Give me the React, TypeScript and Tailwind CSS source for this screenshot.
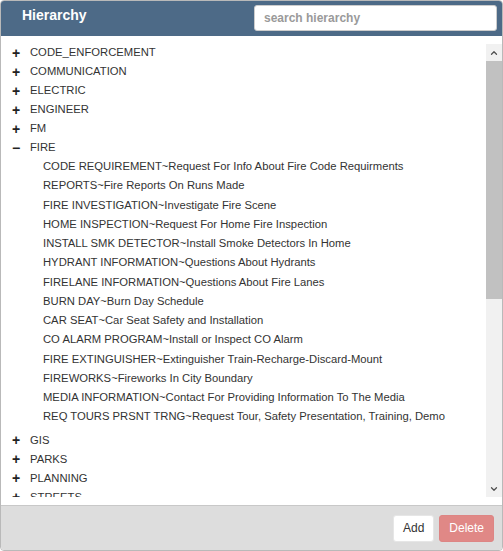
import { ChevronDown, ChevronUp } from 'lucide-react'

const topBefore = ['CODE_ENFORCEMENT', 'COMMUNICATION', 'ELECTRIC', 'ENGINEER', 'FM']
const fireChildren = [
  'CODE REQUIREMENT~Request For Info About Fire Code Requirments',
  'REPORTS~Fire Reports On Runs Made',
  'FIRE INVESTIGATION~Investigate Fire Scene',
  'HOME INSPECTION~Request For Home Fire Inspection',
  'INSTALL SMK DETECTOR~Install Smoke Detectors In Home',
  'HYDRANT INFORMATION~Questions About Hydrants',
  'FIRELANE INFORMATION~Questions About Fire Lanes',
  'BURN DAY~Burn Day Schedule',
  'CAR SEAT~Car Seat Safety and Installation',
  'CO ALARM PROGRAM~Install or Inspect CO Alarm',
  'FIRE EXTINGUISHER~Extinguisher Train-Recharge-Discard-Mount',
  'FIREWORKS~Fireworks In City Boundary',
  'MEDIA INFORMATION~Contact For Providing Information To The Media',
  'REQ TOURS PRSNT TRNG~Request Tour, Safety Presentation, Training, Demo',
]
const topAfter = ['GIS', 'PARKS', 'PLANNING', 'STREETS']

function TopRow({ label, open }: { label: string; open?: boolean }) {
  return (
    <div className="flex h-[19px] items-center">
      <span className="flex w-[18px] justify-center pl-[12px] text-[14px] font-bold leading-none text-[#222]">
        {open ? '−' : '+'}
      </span>
      <span className="ml-[11px] whitespace-nowrap">{label}</span>
    </div>
  )
}

export default function App() {
  return (
    <div
      className="flex h-[551px] w-[503px] flex-col overflow-hidden rounded-[4px] border border-[#b9b9b9] bg-white text-[11.25px] text-[#333]"
      style={{ fontFamily: '"Liberation Sans", Arial, sans-serif' }}
    >
      <div className="flex h-[35px] shrink-0 items-start justify-between bg-[#4d6a87] pl-[21px] pr-[5px] pt-[4px]">
        <h2 className="text-[14px] font-bold leading-[20px] text-white">Hierarchy</h2>
        <input
          className="h-[26px] w-[243px] rounded-[3px] border border-[#ccc] bg-white px-[9px] text-[12px] font-bold outline-none placeholder:text-[#9a9a9a]"
          placeholder="search hierarchy"
        />
      </div>

      <div className="flex min-h-0 flex-1 py-[8px]">
        <div className="-mt-[1px] min-w-0 flex-1 overflow-hidden">
          {topBefore.map((t) => (
            <TopRow key={t} label={t} />
          ))}
          <TopRow label="FIRE" open />
          <div className="pb-[4px]">
            {fireChildren.map((c) => (
              <div key={c} className="flex h-[19.25px] items-center whitespace-nowrap pl-[42px]">
                {c}
              </div>
            ))}
          </div>
          {topAfter.map((t) => (
            <TopRow key={t} label={t} />
          ))}
        </div>

        <div className="flex w-[16px] shrink-0 flex-col bg-[#f1f1f1]">
          <div className="flex h-[17px] items-center justify-center text-[#505050]">
            <ChevronUp className="size-[10px]" strokeWidth={3} />
          </div>
          <div className="flex-1">
            <div className="h-[238px] bg-[#c1c1c1]" />
          </div>
          <div className="flex h-[17px] items-center justify-center text-[#505050]">
            <ChevronDown className="size-[10px]" strokeWidth={3} />
          </div>
        </div>
      </div>

      <div className="flex h-[45px] shrink-0 items-center justify-end gap-[5px] border-t border-[#c8c8c8] bg-[#dddddd] pr-[8px]">
        <button className="h-[27px] rounded-[3px] border border-[#e6e6e6] bg-white px-[9px] text-[12px] text-[#333]">
          Add
        </button>
        <button className="h-[27px] rounded-[3px] border border-[#dd8584] bg-[#e08886] px-[9px] text-[12px] text-white">
          Delete
        </button>
      </div>
    </div>
  )
}
